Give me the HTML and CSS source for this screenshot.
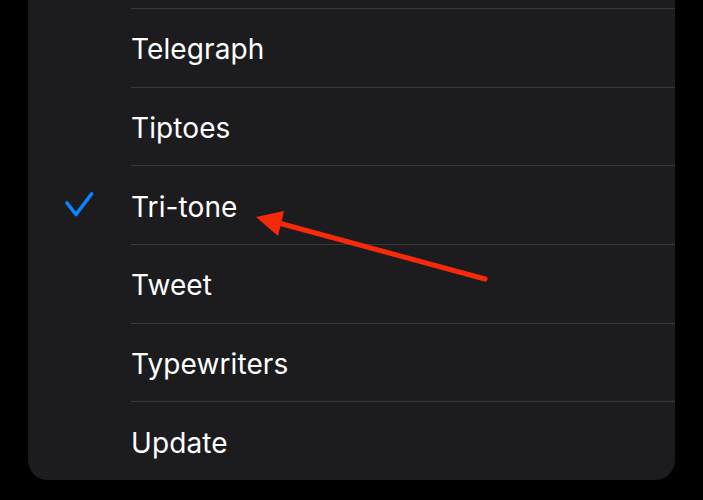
FILE: index.html
```html
<!DOCTYPE html>
<html lang="en">
  <head>
    <meta charset="UTF-8" />
    <meta name="viewport" content="width=device-width, initial-scale=1.0" />
    <title>Ringtones</title>
    <link rel="stylesheet" href="styles.css">
  </head>
  <body>
    <div class="sheet">
      <ul class="tone_list">
        <li class="tone_row">
          <span class="check"></span>
          <span class="tone_name">Telegraph</span>
        </li>
        <li class="tone_row">
          <span class="check"></span>
          <span class="tone_name">Tiptoes</span>
        </li>
        <li class="tone_row selected">
          <span class="check">
            <svg width="30" height="28" viewBox="0 0 30 28">
              <path d="M3 11 L12 22.5 L27.5 2" fill="none" stroke="#0a84ff" stroke-width="3.6" stroke-linecap="round" stroke-linejoin="round" />
            </svg>
          </span>
          <span class="tone_name">Tri-tone</span>
        </li>
        <li class="tone_row">
          <span class="check"></span>
          <span class="tone_name">Tweet</span>
        </li>
        <li class="tone_row">
          <span class="check"></span>
          <span class="tone_name">Typewriters</span>
        </li>
        <li class="tone_row">
          <span class="check"></span>
          <span class="tone_name">Update</span>
        </li>
      </ul>
    </div>

    <!-- annotation arrow -->
    <svg class="arrow" width="703" height="500" viewBox="0 0 703 500">
      <line x1="485" y1="279" x2="275" y2="222" stroke="#f7290b" stroke-width="5" stroke-linecap="round" />
      <polygon points="256,217 284,211 278,236" fill="#f7290b" />
    </svg>
  </body>
</html>
```

FILE: styles.css
```css
body {
  margin: 0;
  background-color: #000;
  font-family: Inter, "Noto Sans", sans-serif;
}

.sheet {
  width: 647px;
  margin: 0 28px;
  padding-top: 8px;
  background-color: #1c1c1e;
  border-radius: 0 0 20px 20px;
  overflow: hidden;
}

.tone_list {
  list-style: none;
  margin: 0;
  padding: 0;
}

.tone_row {
  display: flex;
  align-items: center;
  height: 78.7px;
  box-sizing: border-box;
}

.check {
  width: 104px;
  display: flex;
  justify-content: flex-start;
  padding-left: 36px;
  padding-top: 2px;
  box-sizing: border-box;
  flex-shrink: 0;
}

.tone_name {
  flex: 1;
  height: 100%;
  display: flex;
  align-items: center;
  padding-top: 3px;
  padding-left: 0;
  margin-left: -1px;
  box-sizing: border-box;
  border-top: 1px solid #38383a;
  color: #fff;
  font-size: 28px;
  letter-spacing: 0.1px;
}

.arrow {
  position: absolute;
  top: 0;
  left: 0;
}
```
